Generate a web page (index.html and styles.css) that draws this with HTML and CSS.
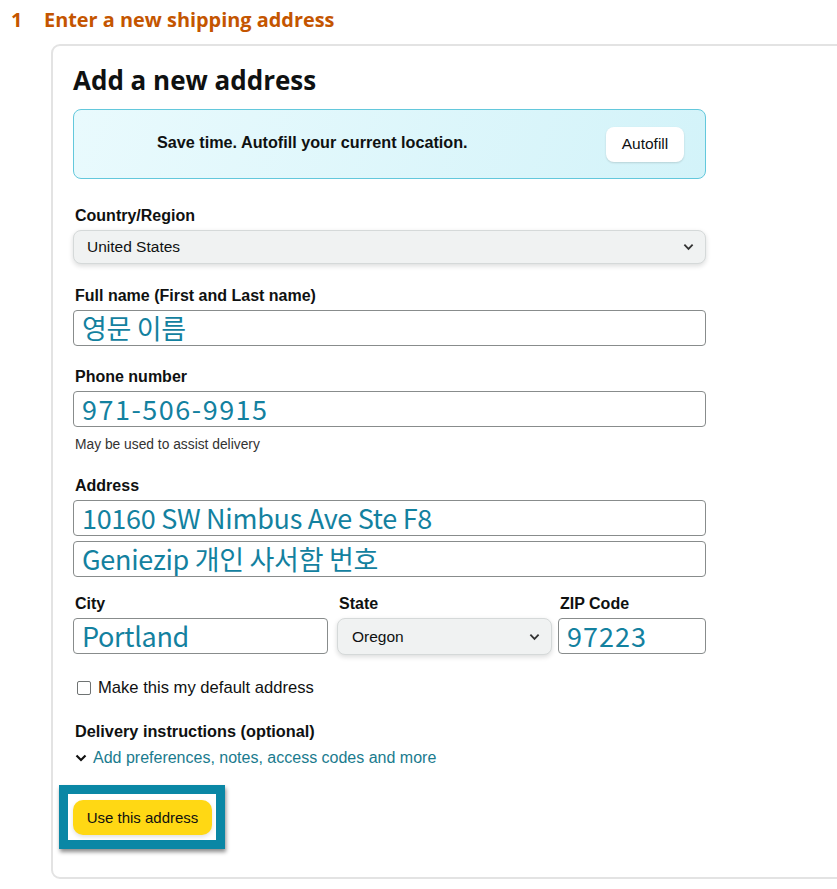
FILE: index.html
```html
<!DOCTYPE html>
<html lang="en">
<head>
<meta charset="utf-8">
<title>Enter a new shipping address</title>
<link rel="stylesheet" href="styles.css">
</head>
<body>
<div class="step">
  <span class="step-num">1</span>
  <span class="step-title">Enter a new shipping address</span>
</div>
<div class="card">
  <h1 class="card-title">Add a new address</h1>
  <div class="banner">
    <span class="banner-text">Save time. Autofill your current location.</span>
    <span class="btn-autofill">Autofill</span>
  </div>

  <div class="field f-country">
    <div class="label">Country/Region</div>
    <div class="select"><span>United States</span><svg class="chev" viewBox="0 0 12 8" width="11" height="8"><path d="M1.5 1.5 6 6l4.5-4.5" fill="none" stroke="#333" stroke-width="2"/></svg></div>
  </div>

  <div class="field f-name">
    <div class="label">Full name (First and Last name)</div>
    <div class="input"><span class="val">영문 이름</span></div>
  </div>

  <div class="field f-phone">
    <div class="label">Phone number</div>
    <div class="input"><span class="val phone">971-506-9915</span></div>
    <div class="hint">May be used to assist delivery</div>
  </div>

  <div class="field f-address">
    <div class="label">Address</div>
    <div class="input"><span class="val">10160 SW Nimbus Ave Ste F8</span></div>
    <div class="input second"><span class="val">Geniezip 개인 사서함 번호</span></div>
  </div>

  <div class="row3">
    <div class="field c-city">
      <div class="label">City</div>
      <div class="input"><span class="val">Portland</span></div>
    </div>
    <div class="field c-state">
      <div class="label">State</div>
      <div class="select state"><span>Oregon</span><svg class="chev" viewBox="0 0 12 8" width="11" height="8"><path d="M1.5 1.5 6 6l4.5-4.5" fill="none" stroke="#333" stroke-width="2"/></svg></div>
    </div>
    <div class="field c-zip">
      <div class="label">ZIP Code</div>
      <div class="input"><span class="val zip">97223</span></div>
    </div>
  </div>

  <label class="check">
    <span class="box"></span>
    <span>Make this my default address</span>
  </label>

  <div class="delivery">
    <div class="label2">Delivery instructions (optional)</div>
    <div class="link"><svg class="lchev" viewBox="0 0 12 8" width="12" height="8"><path d="M1.5 1.5 6 6l4.5-4.5" fill="none" stroke="#111" stroke-width="2.2"/></svg><span>Add preferences, notes, access codes and more</span></div>
  </div>

  <div class="highlight">
    <span class="btn-use">Use this address</span>
  </div>
</div>
</body>
</html>
```

FILE: styles.css
```css
html, body {
  margin: 0;
  padding: 0;
  background: #fff;
  overflow: hidden;
}
body {
  font-family: "Liberation Sans", Arial, sans-serif;
  color: #0f1111;
  width: 837px;
  height: 889px;
}
.step {
  display: flex;
  align-items: center;
  height: 40px;
  padding-left: 11px;
  color: #c45500;
  font-weight: bold;
  font-size: 19.9px;
  font-family: "Open Sans", "Liberation Sans", sans-serif;
  box-sizing: border-box;
  padding-bottom: 1px;
}
.step-num { width: 33px; }
.card {
  margin-left: 51px;
  margin-top: 4px;
  width: 820px;
  height: 835px;
  box-sizing: border-box;
  border: 2px solid #e3e3e3;
  border-radius: 9px;
  padding: 17px 0 0 20px;
}
.card-title {
  margin: 0;
  font-family: "Open Sans", "Liberation Sans", sans-serif;
  font-size: 26px;
  line-height: 34px;
  font-weight: bold;
  color: #0f1111;
}
.banner {
  margin-top: 12px;
  width: 633px;
  height: 70px;
  box-sizing: border-box;
  border: 1px solid #63c8dc;
  border-radius: 8px;
  background: linear-gradient(110deg, #e9fafd 0%, #d3f3f9 100%);
  display: flex;
  align-items: center;
  justify-content: space-between;
  padding: 0 21px 4px 83px;
}
.banner-text {
  font-weight: bold;
  font-size: 16.2px;
  color: #0f1111;
}
.btn-autofill {
  width: 78px;
  height: 35px;
  margin-top: 4px;
  box-sizing: border-box;
  background: #fff;
  border-radius: 8px;
  box-shadow: 0 1px 2px rgba(15,17,17,0.15);
  display: flex;
  align-items: center;
  justify-content: center;
  font-size: 15.5px;
  color: #0f1111;
}
.field { width: 633px; }
.label {
  font-weight: bold;
  font-size: 16px;
  line-height: 19px;
  margin-left: 2px;
  margin-bottom: 5px;
  color: #0f1111;
}
.label2 {
  font-weight: bold;
  font-size: 16.3px;
  line-height: 19px;
  margin-left: 2px;
  color: #0f1111;
}
.f-country { margin-top: 27px; }
.select {
  height: 34px;
  box-sizing: border-box;
  background: #f0f2f2;
  border: 1px solid #d5d9d9;
  border-radius: 8px;
  box-shadow: 0 2px 5px rgba(15,17,17,0.15);
  display: flex;
  align-items: center;
  justify-content: space-between;
  padding: 0 11px 0 13px;
  font-size: 15.5px;
  color: #0f1111;
}
.input {
  height: 36px;
  box-sizing: border-box;
  border: 1px solid #888c8c;
  border-radius: 4px;
  display: flex;
  align-items: center;
  padding-left: 8px;
}
.input.second { margin-top: 5px; }
.val {
  font-family: "Noto Sans CJK KR", "Noto Sans", sans-serif;
  font-size: 27px;
  line-height: 30px;
  color: #13819f;
  letter-spacing: -0.3px;
  white-space: nowrap;
}
.val.phone { letter-spacing: 1.5px; }
.val.zip { letter-spacing: 1px; }
.f-name { margin-top: 22px; }
.f-phone { margin-top: 21px; }
.hint {
  margin-top: 9px;
  margin-left: 2px;
  font-size: 13.8px;
  line-height: 17px;
  color: #333;
}
.f-address { margin-top: 23px; }
.row3 {
  margin-top: 17px;
  display: flex;
  gap: 9px;
  width: 633px;
}
.c-city { width: 255px; }
.c-state { width: 215px; }
.c-state .select.state { height: 37px; padding-left: 14px; }
.c-zip { width: 148px; margin-left: -3px; }
.check {
  margin-top: 23px;
  display: flex;
  align-items: center;
  gap: 7px;
  font-size: 16.6px;
  color: #0f1111;
  margin-left: 4px;
}
.box {
  width: 12px;
  height: 12px;
  border: 1px solid #6f7373;
  border-radius: 2px;
  display: inline-block;
  background: #fff;
}
.delivery { margin-top: 24px; }
.link {
  margin-top: 8px;
  display: flex;
  align-items: center;
  gap: 6px;
  font-size: 16px;
  color: #1a7b8e;
  margin-left: 2px;
}
.highlight {
  margin-top: 18px;
  margin-left: -14px;
  width: 166px;
  height: 64px;
  box-sizing: border-box;
  border: 9px solid #0a87a5;
  background: #fff;
  box-shadow: 1px 3px 4px rgba(0,0,0,0.45);
  display: flex;
  align-items: center;
  padding-left: 5px;
}
.btn-use {
  width: 139px;
  height: 35px;
  border-radius: 10px;
  background: #ffd814;
  box-shadow: 0 2px 4px rgba(0,0,0,0.12);
  display: flex;
  align-items: center;
  justify-content: center;
  font-size: 15px;
  color: #0f1111;
}
```
